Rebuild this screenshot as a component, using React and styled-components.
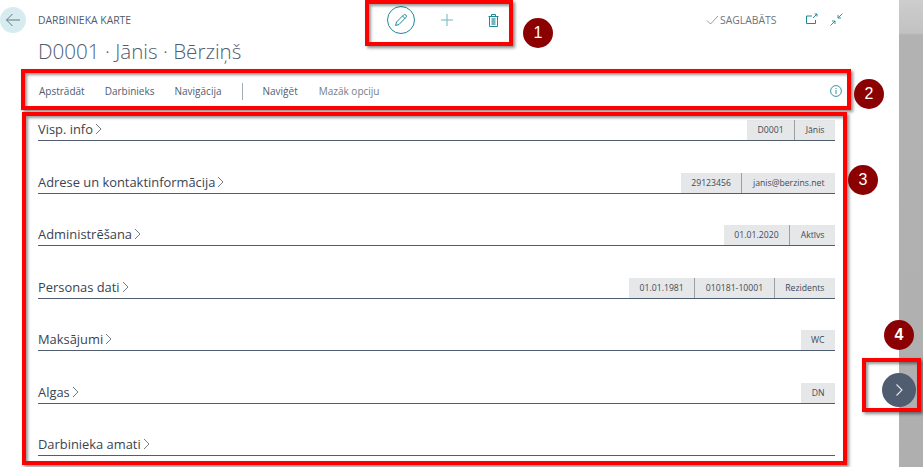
import styled, { createGlobalStyle } from "styled-components";

const GlobalStyle = createGlobalStyle`
  html, body {
    margin: 0;
    padding: 0;
    background: #fff;
    font-family: "Open Sans", "Noto Sans", "Liberation Sans", sans-serif;
  }
`;

const Page = styled.div`
  position: relative;
  display: flex;
  width: 923px;
  height: 467px;
  overflow: hidden;
  background: #fff;
`;

const Main = styled.div`
  flex: 1;
  min-width: 0;
`;

const ScrollStrip = styled.div`
  width: 24px;
  background: linear-gradient(#cdcdcd 0, #c2c2c2 33px, #b2b2b2 35px, #afafaf 100%);
`;

const Header = styled.header`
  display: flex;
  height: 73px;
`;

const BackButton = styled.div`
  width: 26px;
  height: 26px;
  margin: 7px 12px 0 0;
  border-radius: 50%;
  background: #d6ecf0;
  display: flex;
  align-items: center;
  justify-content: center;
`;

const Titles = styled.div`
  width: 340px;
  padding-top: 13px;
`;

const Caption = styled.div`
  font-size: 10.4px;
  line-height: 14px;
  color: #505c6f;
  white-space: nowrap;
`;

const Title = styled.h1`
  margin: 9px 0 0;
  font-size: 20.6px;
  line-height: 30px;
  font-weight: 300;
  color: #505c6f;
  white-space: nowrap;
`;

const Actions = styled.div`
  display: flex;
  align-items: center;
  height: 28px;
  margin-top: 6px;
  width: 328px;
`;

const ActionSlot = styled.div`
  width: 46px;
  height: 28px;
  display: flex;
  align-items: center;
  justify-content: center;
`;

const EditCircle = styled.div`
  width: 26px;
  height: 26px;
  border: 1px solid #1f8a96;
  border-radius: 50%;
  display: flex;
  align-items: center;
  justify-content: center;
`;

const Saved = styled.div`
  display: flex;
  align-items: center;
  gap: 1px;
  height: 14px;
  margin-top: 13px;
  width: 100px;
  font-size: 10.4px;
  color: #6b7482;
`;

const HeaderIcons = styled.div`
  display: flex;
  gap: 12px;
  margin-top: 13px;
`;

const Toolbar = styled.nav`
  display: flex;
  align-items: center;
  height: 36px;
  margin-right: 50px;
  padding: 0 7px 0 39px;
  font-size: 10px;
  color: #505c6f;
`;

const ToolItem = styled.span`
  margin-right: ${(p) => p.$gap}px;
  color: ${(p) => (p.$muted ? "#747d8b" : "#505c6f")};
  white-space: nowrap;
`;

const ToolDivider = styled.span`
  width: 1px;
  height: 17px;
  margin-right: 20px;
  background: #a5abb4;
`;

const InfoIcon = styled.span`
  margin-left: auto;
  display: flex;
`;

const Sections = styled.section`
  margin: 3px 64px 0 38px;
`;

const Row = styled.div`
  display: flex;
  align-items: flex-end;
  justify-content: space-between;
  height: ${(p) => (p.$first ? 28 : 51.5)}px;
  border-bottom: 1px solid #505c6f;
`;

const RowTitle = styled.div`
  display: flex;
  align-items: center;
  gap: 2px;
  height: 22px;
  font-size: 12.9px;
  font-weight: 500;
  color: #3a4350;
  white-space: nowrap;
`;

const Pills = styled.div`
  display: flex;
  height: 20px;
`;

const Pill = styled.div`
  display: flex;
  align-items: center;
  padding: 0 10.5px;
  background: #e6e7e9;
  border-left: 1px solid #9a9fa6;
  font-size: 8.7px;
  color: #404a58;
  white-space: nowrap;

  &:first-child {
    border-left: none;
  }
`;

const Marker = styled.div`
  position: absolute;
  left: ${(p) => p.$x}px;
  top: ${(p) => p.$y}px;
  width: ${(p) => p.$w}px;
  height: ${(p) => p.$h}px;
  box-sizing: border-box;
  border: 4px solid #fe0000;
  box-shadow: 2px 2px 3px rgba(0, 0, 0, 0.45), inset 2px 2px 3px rgba(0, 0, 0, 0.4);
  pointer-events: none;
`;

const Badge = styled.div`
  position: absolute;
  left: ${(p) => p.$x}px;
  top: ${(p) => p.$y}px;
  width: 30px;
  height: 30px;
  border-radius: 50%;
  background: #8b0000;
  color: #fff;
  display: flex;
  align-items: center;
  justify-content: center;
  font-family: "Liberation Sans", sans-serif;
  font-size: 16px;
  font-weight: ${(p) => (p.$bold ? 700 : 400)};
`;

const NextButton = styled.div`
  position: absolute;
  left: 882px;
  top: 373px;
  width: 34px;
  height: 34px;
  border-radius: 50%;
  background: #505c6f;
  display: flex;
  align-items: center;
  justify-content: center;
`;

const Chevron = () => (
  <svg width="7" height="12" viewBox="0 0 7 12" fill="none" stroke="#505c6f" strokeWidth="0.8">
    <path d="M1 1l5 5-5 5" />
  </svg>
);

const rows = [
  { title: "Visp. info", pills: ["D0001", "Jānis"] },
  { title: "Adrese un kontaktinformācija", pills: ["29123456", "janis@berzins.net"] },
  { title: "Administrēšana", pills: ["01.01.2020", "Aktīvs"] },
  { title: "Personas dati", pills: ["01.01.1981", "010181-10001", "Rezidents"] },
  { title: "Maksājumi", pills: ["WC"] },
  { title: "Algas", pills: ["DN"] },
  { title: "Darbinieka amati", pills: [] },
];

export default function App() {
  return (
    <Page>
      <GlobalStyle />
      <Main>
        <Header>
          <BackButton>
            <svg width="16" height="14" viewBox="0 0 16 14" fill="none" stroke="#6b7482" strokeWidth="1">
              <path d="M15 7H1.5M7.5 1l-6 6 6 6" />
            </svg>
          </BackButton>
          <Titles>
            <Caption>DARBINIEKA KARTE</Caption>
            <Title>D0001 · Jānis · Bērziņš</Title>
          </Titles>
          <Actions>
            <ActionSlot>
              <EditCircle>
                <svg width="14" height="14" viewBox="0 0 14 14" fill="none" stroke="#1f8a96" strokeWidth="1">
                  <path d="M2.5 9L9.5 2a1.6 1.6 0 0 1 2.4 2.4L5 11.5l-3.4 1z" />
                  <path d="M8.5 3l2.5 2.5" />
                </svg>
              </EditCircle>
            </ActionSlot>
            <ActionSlot>
              <svg width="14" height="14" viewBox="0 0 14 14" fill="none" stroke="#6fb5bd" strokeWidth="1">
                <path d="M7 1v12M1 7h12" />
              </svg>
            </ActionSlot>
            <ActionSlot>
              <svg width="11" height="13" viewBox="0 0 11 13" fill="none" stroke="#1f8a96" strokeWidth="1">
                <path d="M.5 2.5h10M3.5 2.5V.5h4v2M1.5 2.5v10h8v-10" />
                <path d="M3.5 4v7h4V4z" fill="#6fb5bd" stroke="none" />
              </svg>
            </ActionSlot>
          </Actions>
          <Saved>
            <svg width="13" height="10" viewBox="0 0 13 10" fill="none" stroke="#8a919c" strokeWidth="0.9">
              <path d="M1 5.5L4.5 9 12 1" />
            </svg>
            SAGLABĀTS
          </Saved>
          <HeaderIcons>
            <svg width="12" height="12" viewBox="0 0 12 12" fill="none" stroke="#1f8a96" strokeWidth="1">
              <path d="M6 3H.5v7.5h9V7M7 5l4-4M8.5 1H11v2.5" />
            </svg>
            <svg width="13" height="13" viewBox="0 0 13 13" fill="none" stroke="#1f8a96" strokeWidth="0.9">
              <path d="M12.5.5L8 5M8 2v3h3M.5 12.5L5 8M2 8h3v3" />
            </svg>
          </HeaderIcons>
        </Header>
        <Toolbar>
          <ToolItem $gap={20}>Apstrādāt</ToolItem>
          <ToolItem $gap={20}>Darbinieks</ToolItem>
          <ToolItem $gap={20}>Navigācija</ToolItem>
          <ToolDivider />
          <ToolItem $gap={21}>Naviģēt</ToolItem>
          <ToolItem $muted $gap={0}>Mazāk opciju</ToolItem>
          <InfoIcon>
            <svg width="12" height="12" viewBox="0 0 12 12" fill="none" stroke="#1f8a96" strokeWidth="0.9">
              <circle cx="6" cy="6" r="5.4" />
              <path d="M6 5v4M6 3v1" />
            </svg>
          </InfoIcon>
        </Toolbar>
        <Sections>
          {rows.map((row, i) => (
            <Row key={row.title} $first={i === 0}>
              <RowTitle>
                {row.title}
                <Chevron />
              </RowTitle>
              <Pills>
                {row.pills.map((pill) => (
                  <Pill key={pill}>{pill}</Pill>
                ))}
              </Pills>
            </Row>
          ))}
        </Sections>
      </Main>
      <ScrollStrip />

      <NextButton>
        <svg width="9" height="14" viewBox="0 0 9 14" fill="none" stroke="#e6e7e9" strokeWidth="1.1">
          <path d="M1.5 1.5L7 7l-5.5 5.5" />
        </svg>
      </NextButton>

      <Marker $x={365} $y={0} $w={148} $h={46} />
      <Marker $x={21} $y={69} $w={830} $h={41} />
      <Marker $x={22} $y={112} $w={825} $h={353} />
      <Marker $x={862} $y={358} $w={59} $h={54} />

      <Badge $x={523} $y={18}>1</Badge>
      <Badge $x={854} $y={79}>2</Badge>
      <Badge $x={848} $y={165}>3</Badge>
      <Badge $x={884} $y={320} $bold>4</Badge>
    </Page>
  );
}
